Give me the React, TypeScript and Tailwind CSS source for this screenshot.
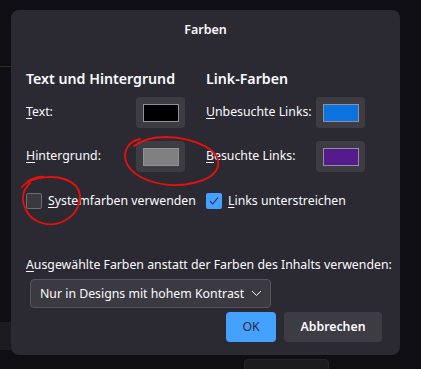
import React from "react";

function Swatch({ color }: { color: string }) {
  return (
    <div className="w-[49px] h-[31px] rounded-[4px] bg-[#3d3c43] flex items-center justify-center">
      <div className="w-[36px] h-[18px] border border-[#8f8f9d]" style={{ backgroundColor: color }} />
    </div>
  );
}

function Row({ k, rest, color }: { k: string; rest: string; color: string }) {
  return (
    <div className="flex items-center h-[31px]">
      <span className="w-[110px] text-[12.3px] whitespace-nowrap">
        <span className="underline underline-offset-2">{k}</span>
        {rest}
      </span>
      <Swatch color={color} />
    </div>
  );
}

export default function App() {
  return (
    <div
      className="relative w-[421px] h-[369px] bg-[#0f0f13] overflow-hidden pl-[11px] pt-[10px] text-[#fbfbfe] whitespace-nowrap"
      style={{ fontFamily: '"Noto Sans", "Open Sans", sans-serif' }}
    >
      {/* content behind the dialog */}
      <div className="absolute left-0 top-[66px] w-[11px] h-px bg-[#2c2c31]" />
      <div className="absolute left-0 top-[322px] w-[11px] h-[28px] bg-[#1c1b21]" />
      <div className="absolute left-[244px] top-[359px] w-[85px] h-[20px] rounded-[4px] bg-[#1a1a1f] border border-[#26252b]" />

      <div className="relative w-[389px] h-[345px] rounded-[8px] bg-[#2b2a33]">
        <div className="h-[41px] flex items-center justify-center text-[12.5px] font-semibold">Farben</div>

        <div className="flex pl-[15px] mt-[18px]">
          <div className="w-[180px] flex flex-col">
            <div className="h-[20px] leading-[20px] text-[14.2px] font-semibold">Text und Hintergrund</div>
            <div className="mt-[8px] flex flex-col gap-[13px]">
              <Row k="T" rest="ext:" color="#000000" />
              <Row k="H" rest="intergrund:" color="#808080" />
            </div>
          </div>
          <div className="flex flex-col">
            <div className="h-[20px] leading-[20px] text-[14.2px] font-semibold">Link-Farben</div>
            <div className="mt-[8px] flex flex-col gap-[13px]">
              <Row k="U" rest="nbesuchte Links:" color="#0a73e0" />
              <Row k="B" rest="esuchte Links:" color="#551a8b" />
            </div>
          </div>
        </div>

        <div className="flex pl-[15px] mt-[20px] text-[12.3px]">
          <div className="w-[180px] flex items-center gap-[6px]">
            <div className="w-[16px] h-[16px] rounded-[2px] bg-[#3a3940] border border-[#6d6c72]" />
            <span>
              <span className="underline underline-offset-2">S</span>ystemfarben verwenden
            </span>
          </div>
          <div className="flex items-center gap-[6px]">
            <div className="w-[16px] h-[16px] rounded-[2px] bg-[#45a1ff] flex items-center justify-center">
              <svg width="12" height="12" viewBox="0 0 12 12">
                <path d="M2 6.2 L4.6 9 L10 2.6" fill="none" stroke="#2b2a33" strokeWidth="1.1" />
              </svg>
            </div>
            <span>
              <span className="underline underline-offset-2">L</span>inks unterstreichen
            </span>
          </div>
        </div>

        <div className="pl-[15px] mt-[46px] h-[18px] leading-[18px] text-[12.3px]">
          <span className="underline underline-offset-2">A</span>usgewählte Farben anstatt der Farben des Inhalts verwenden:
        </div>

        <div className="ml-[19px] mt-[5px] w-[241px] h-[29px] rounded-[4px] bg-[#3b3a41] border border-[#56555c] flex items-center pl-[9px] text-[12.3px]">
          <span>Nur in Designs mit hohem Kontrast</span>
          <svg className="ml-[7px]" width="11" height="7" viewBox="0 0 11 7">
            <path d="M1 1 L5.5 5.5 L10 1" fill="none" stroke="#fbfbfe" strokeWidth="1" />
          </svg>
        </div>

        <div className="flex justify-end gap-[8px] pr-[18px] mt-[4px] text-[12.3px]">
          <button className="w-[50px] h-[30px] rounded-[4px] bg-[#45a1ff] text-[#2b2a33]">OK</button>
          <button className="w-[98px] h-[30px] rounded-[4px] bg-[#3d3c43] font-semibold">Abbrechen</button>
        </div>

        {/* red hand-drawn annotations */}
        <svg className="absolute -left-[11px] -top-[10px] pointer-events-none" width="421" height="369" viewBox="0 0 421 369">
          <path
            d="M140 139 C120 143 117 170 150 181 C176 190 214 183 218 166 C221 150 196 138 166 137 C152 137 142 140 134 146"
            fill="none"
            stroke="#e8100d"
            strokeWidth="1.8"
            strokeLinecap="round"
          />
          <path
            d="M28 181 C34 178 40 176 44 177 M22 187 C30 176 62 172 76 186 C84 196 80 214 62 222 C48 228 32 222 26 210 C21 200 22 191 30 183"
            fill="none"
            stroke="#e8100d"
            strokeWidth="1.8"
            strokeLinecap="round"
          />
        </svg>
      </div>
    </div>
  );
}
